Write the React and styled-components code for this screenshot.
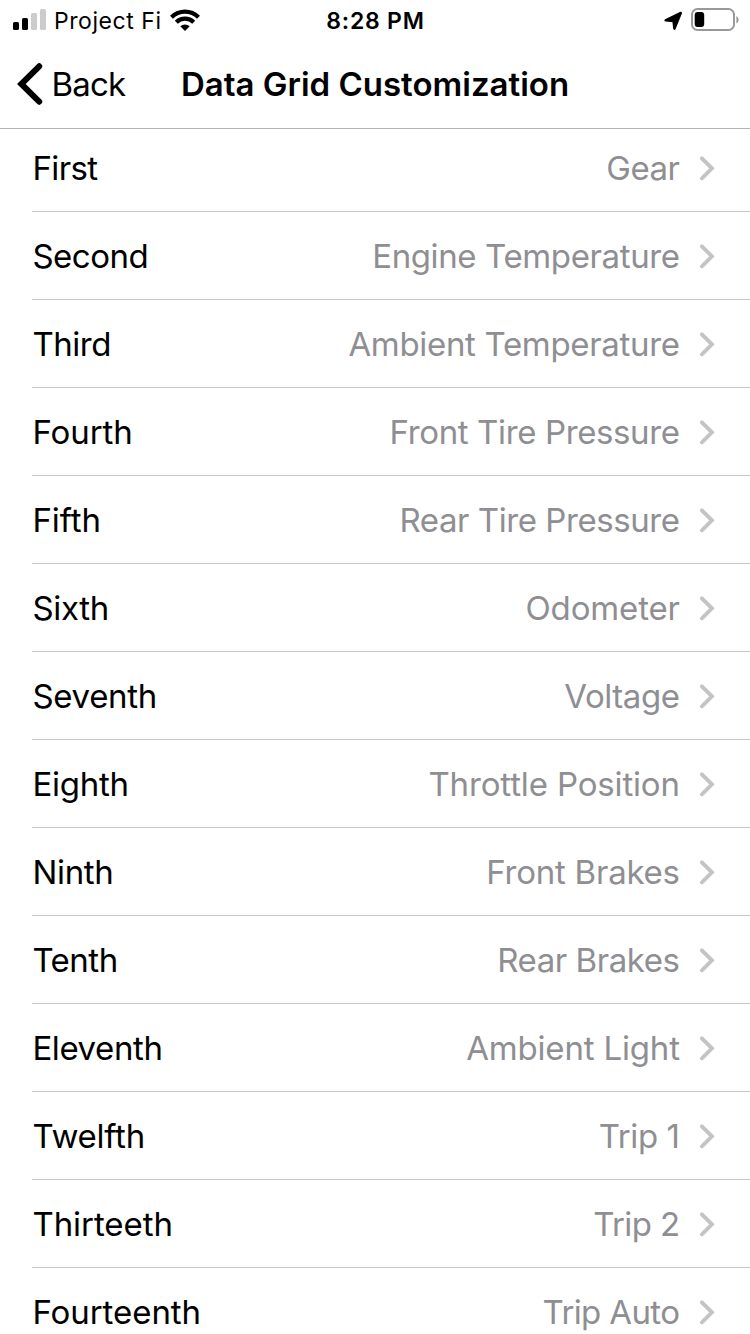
import React from "react";
import styled, { createGlobalStyle } from "styled-components";

const GlobalStyle = createGlobalStyle`
  *, *::before, *::after { box-sizing: border-box; }
  body { margin: 0; background: #fff; }
`;

const Screen = styled.div`
  width: 750px;
  height: 1334px;
  overflow: hidden;
  background: #fff;
  color: #000;
  font-family: Inter, "Liberation Sans", sans-serif;
  font-size: 33px;
  font-variant-ligatures: none;
  white-space: nowrap;
`;

const Header = styled.header`
  position: relative;
  z-index: 1;
  height: 129px;
  background: #fff;
  border-bottom: 1px solid #b2b2b2;
`;

const StatusBar = styled.div`
  display: grid;
  grid-template-columns: 1fr auto 1fr;
  align-items: start;
  height: 40px;
  padding: 0 11px 0 13px;
  font-size: 23px;
  line-height: 42px;
`;

const StatusGroup = styled.div`
  display: flex;
  align-items: center;
  justify-content: ${(p) => (p.$end ? "flex-end" : "flex-start")};
  gap: ${(p) => (p.$end ? 8 : 0)}px;
  height: 40px;

  svg { display: block; flex: none; }
`;

const Carrier = styled.span`
  align-self: flex-start;
  margin: 0 8px 0 8px;
  letter-spacing: 0.55px;
`;

const Clock = styled.span`
  font-weight: 600;
  letter-spacing: 0.8px;
  margin-right: 1px;
`;

const NavBar = styled.nav`
  display: grid;
  grid-template-columns: 1fr auto 1fr;
  align-items: center;
  height: 88px;
  padding: 0 17px;
`;

const BackButton = styled.button`
  display: flex;
  align-items: center;
  gap: 8.5px;
  padding: 0;
  border: 0;
  background: none;
  color: inherit;
  font: inherit;
  letter-spacing: -0.8px;

  svg { display: block; flex: none; }
`;

const Title = styled.h1`
  margin: 0;
  font-size: 33px;
  font-weight: 600;
  letter-spacing: 0;
`;

const List = styled.ul`
  margin: -5px 0 0;
  padding: 0 0 0 32px;
  list-style: none;
`;

const Row = styled.li`
  display: flex;
  align-items: center;
  height: 88px;
  padding-right: 35px;
  border-bottom: 1px solid #c6c6c8;

  svg { display: block; flex: none; }
`;

const Label = styled.span`
  flex: 1;
  padding-left: 0.4px;
  letter-spacing: ${(p) => p.$tracking}px;
`;

const Value = styled.span`
  margin-right: ${(p) => 19 - p.$tracking}px;
  color: #8e8e93;
  letter-spacing: ${(p) => p.$tracking}px;
`;

const SignalIcon = () => (
  <svg width="33" height="22" viewBox="0 0 33 22">
    <rect x="0" y="13" width="6" height="8" rx="1.6" />
    <rect x="9" y="9" width="6" height="12" rx="1.6" />
    <rect x="18" y="4" width="6" height="17" rx="1.6" fill="#ccc" />
    <rect x="27" y="0" width="6" height="21" rx="1.6" fill="#ccc" />
  </svg>
);

const WifiIcon = () => (
  <svg width="30" height="22" viewBox="0 0 30 22">
    <g fill="none" stroke="#000" strokeWidth="4.2">
      <path d="M1.5 8.2a19.3 19.3 0 0 1 27 0" />
      <path d="M6.3 13.2a12.5 12.5 0 0 1 17.4 0" />
    </g>
    <path d="M10.3 17.3a6.8 6.8 0 0 1 9.4 0L15 22z" />
  </svg>
);

const LocationIcon = () => (
  <svg width="19" height="22" viewBox="0 0 19 22">
    <path d="M16.9 3.9 10.4 19.7 9.5 12.1 1.6 11.3z" stroke="#000" strokeWidth="2.4" strokeLinejoin="round" />
  </svg>
);

const BatteryIcon = () => (
  <svg width="48" height="24" viewBox="0 0 48 24">
    <rect x="1" y="1" width="42" height="21" rx="5.5" fill="none" stroke="#999" strokeWidth="2" />
    <rect x="3.7" y="4" width="9.5" height="15" rx="3" />
    <path d="M45.4 8v7.6q2.2-1 2.2-3.8T45.4 8z" fill="#999" />
  </svg>
);

const BackIcon = () => (
  <svg width="26" height="42" viewBox="0 0 26 42">
    <path d="M22.2 3.3 4.3 21l17.9 17.7" fill="none" stroke="#000" strokeWidth="6" strokeLinecap="round" strokeLinejoin="miter" />
  </svg>
);

const Chevron = () => (
  <svg width="16" height="26" viewBox="0 0 16 26">
    <path d="M2.9 3.3 12.9 13.3 2.9 23.3" fill="none" stroke="#c4c4c7" strokeWidth="3.9" strokeLinecap="round" strokeLinejoin="miter" />
  </svg>
);

const rows = [
  { label: "First", labelTracking: -0.6, value: "Gear", valueTracking: -0.5 },
  { label: "Second", labelTracking: -0.5, value: "Engine Temperature", valueTracking: -0.38 },
  { label: "Third", labelTracking: -0.45, value: "Ambient Temperature", valueTracking: -0.32 },
  { label: "Fourth", labelTracking: -0.05, value: "Front Tire Pressure", valueTracking: -0.37 },
  { label: "Fifth", labelTracking: -0.05, value: "Rear Tire Pressure", valueTracking: -0.43 },
  { label: "Sixth", labelTracking: -0.3, value: "Odometer", valueTracking: -0.14 },
  { label: "Seventh", labelTracking: -0.3, value: "Voltage", valueTracking: -0.42 },
  { label: "Eighth", labelTracking: -0.25, value: "Throttle Position", valueTracking: -0.15 },
  { label: "Ninth", labelTracking: -0.3, value: "Front Brakes", valueTracking: -0.24 },
  { label: "Tenth", labelTracking: -0.5, value: "Rear Brakes", valueTracking: -0.43 },
  { label: "Eleventh", labelTracking: -0.4, value: "Ambient Light", valueTracking: -0.17 },
  { label: "Twelfth", labelTracking: -0.25, value: "Trip 1", valueTracking: -0.4 },
  { label: "Thirteeth", labelTracking: -0.05, value: "Trip 2", valueTracking: -0.65 },
  { label: "Fourteenth", labelTracking: -0.05, value: "Trip Auto", valueTracking: -0.62 },
];

export default function App() {
  return (
    <Screen>
      <GlobalStyle />
      <Header>
        <StatusBar>
          <StatusGroup>
            <SignalIcon />
            <Carrier>Project Fi</Carrier>
            <WifiIcon />
          </StatusGroup>
          <Clock>8:28 PM</Clock>
          <StatusGroup $end>
            <LocationIcon />
            <BatteryIcon />
          </StatusGroup>
        </StatusBar>
        <NavBar>
          <BackButton>
            <BackIcon />
            Back
          </BackButton>
          <Title>Data Grid Customization</Title>
        </NavBar>
      </Header>
      <List>
        {rows.map((r) => (
          <Row key={r.label}>
            <Label $tracking={r.labelTracking}>{r.label}</Label>
            <Value $tracking={r.valueTracking}>{r.value}</Value>
            <Chevron />
          </Row>
        ))}
      </List>
    </Screen>
  );
}
